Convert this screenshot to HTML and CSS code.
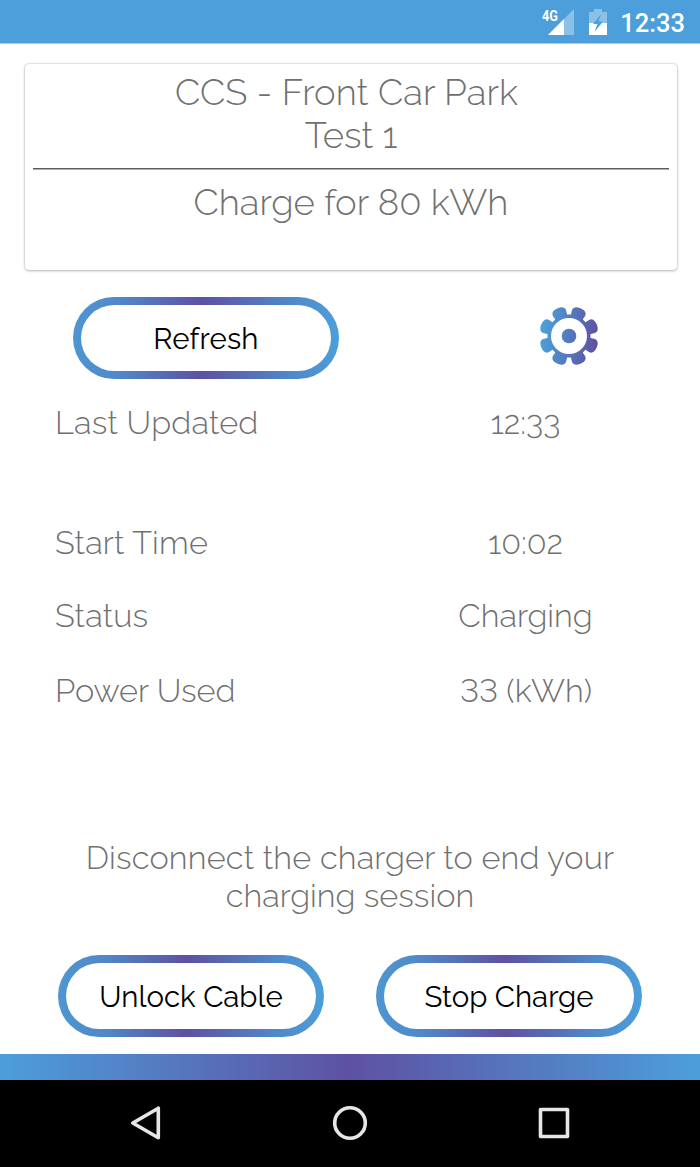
FILE: index.html
```html
<!DOCTYPE html>
<html lang="en">
<head>
  <meta charset="UTF-8" />
  <meta name="viewport" content="width=device-width, initial-scale=1.0"/>
  <title>Charging Session</title>
  <link rel="stylesheet" href="styles.css">
</head>
<body>

  <div class="statusbar">
    <svg class="signal" width="34" height="36" viewBox="-1 -8 34 36">
      <path d="M32 1V27H6Z" fill="#8cc1e7"/>
      <path d="M22 11V27H6Z" fill="#fff"/>
      <path d="M0 0H17V13H0Z" fill="#4c9fda"/>
      <text class="network" x="0" y="13" textLength="16" lengthAdjust="spacingAndGlyphs">4G</text>
    </svg>
    <svg class="battery" width="18" height="26" viewBox="0 0 18 26">
      <path d="M5 0H13V3H18V26H0V3H5Z" fill="#8cc1e7"/>
      <path d="M0 14H18V26H0Z" fill="#fff"/>
      <path d="M12 5.500L4 15H8.500L5.500 23L14 12.500H9.500Z" fill="#4c9fda"/>
    </svg>
    <span class="clock">12:33</span>
  </div>

  <div class="card">
    <div class="title location">CCS - Front Car Park</div>
    <div class="title">Test 1</div>
    <hr>
    <div class="title">Charge for 80 kWh</div>
  </div>

  <div class="tools">
    <button class="refresh">Refresh</button>
    <svg class="gear" width="60" height="60" viewBox="-30 -30 60 60">
      <defs>
        <linearGradient id="gearFill" gradientUnits="userSpaceOnUse" x1="-29" y1="-4" x2="29" y2="4">
          <stop offset="0" stop-color="#4aa3dc"/>
          <stop offset="1" stop-color="#5f4fa0"/>
        </linearGradient>
        <clipPath id="gearShape">
          <circle r="21.500"/>
          <path d="M-6.500 -16L-6.500 -21L-7.200 -25Q-7.200 -28.500 -3.500 -29.600Q0 -30.600 3.500 -29.600Q7.200 -28.500 7.200 -25L6.500 -21L6.500 -16Z" transform="rotate(22.500)"/>
          <path d="M-6.500 -16L-6.500 -21L-7.200 -25Q-7.200 -28.500 -3.500 -29.600Q0 -30.600 3.500 -29.600Q7.200 -28.500 7.200 -25L6.500 -21L6.500 -16Z" transform="rotate(67.500)"/>
          <path d="M-6.500 -16L-6.500 -21L-7.200 -25Q-7.200 -28.500 -3.500 -29.600Q0 -30.600 3.500 -29.600Q7.200 -28.500 7.200 -25L6.500 -21L6.500 -16Z" transform="rotate(112.500)"/>
          <path d="M-6.500 -16L-6.500 -21L-7.200 -25Q-7.200 -28.500 -3.500 -29.600Q0 -30.600 3.500 -29.600Q7.200 -28.500 7.200 -25L6.500 -21L6.500 -16Z" transform="rotate(157.500)"/>
          <path d="M-6.500 -16L-6.500 -21L-7.200 -25Q-7.200 -28.500 -3.500 -29.600Q0 -30.600 3.500 -29.600Q7.200 -28.500 7.200 -25L6.500 -21L6.500 -16Z" transform="rotate(202.500)"/>
          <path d="M-6.500 -16L-6.500 -21L-7.200 -25Q-7.200 -28.500 -3.500 -29.600Q0 -30.600 3.500 -29.600Q7.200 -28.500 7.200 -25L6.500 -21L6.500 -16Z" transform="rotate(247.500)"/>
          <path d="M-6.500 -16L-6.500 -21L-7.200 -25Q-7.200 -28.500 -3.500 -29.600Q0 -30.600 3.500 -29.600Q7.200 -28.500 7.200 -25L6.500 -21L6.500 -16Z" transform="rotate(292.500)"/>
          <path d="M-6.500 -16L-6.500 -21L-7.200 -25Q-7.200 -28.500 -3.500 -29.600Q0 -30.600 3.500 -29.600Q7.200 -28.500 7.200 -25L6.500 -21L6.500 -16Z" transform="rotate(337.500)"/>
        </clipPath>
      </defs>
      <rect x="-30" y="-30" width="60" height="60" fill="url(#gearFill)" clip-path="url(#gearShape)"/>
      <circle r="18" fill="#fff"/>
      <circle r="7.300" fill="url(#gearFill)"/>
    </svg>
  </div>

  <div class="details">
    <span class="label wide">Last Updated</span><span class="value">12:33</span>
    <span class="label wide">Start Time</span><span class="value">10:02</span>
    <span class="label wide">Status</span><span class="value">Charging</span>
    <span class="label">Power Used</span><span class="value used">33 (kWh)</span>
  </div>

  <div class="message">
    <div class="wide">Disconnect the charger to end your</div>
    <div>charging session</div>
  </div>

  <div class="actions">
    <button>Unlock Cable</button>
    <button>Stop Charge</button>
  </div>

  <div class="strip"></div>

  <div class="navbar">
    <svg width="32" height="36" viewBox="0 0 32 36"><path d="M28.300 3.200V32.800L2.800 18Z"/></svg>
    <svg width="36" height="36" viewBox="0 0 36 36"><circle cx="18" cy="18" r="15.300"/></svg>
    <svg width="32" height="36" viewBox="0 0 32 36"><rect x="2.500" y="4.500" width="27" height="27"/></svg>
  </div>

</body>
</html>
```
FILE: styles.css
```css
* {
  box-sizing: border-box;
}
body {
  margin: 0;
  height: 1167px;
  display: flex;
  flex-direction: column;
  overflow: hidden;
  background: #fff;
  color: #707070;
  font-family: Raleway, Lato, "Open Sans", sans-serif;
  font-weight: 300;
  white-space: nowrap;
}
.statusbar {
  height: 44px;
  flex: none;
  display: flex;
  justify-content: flex-end;
  align-items: flex-start;
  padding-right: 15px;
  background: #4c9fda;
  border-bottom: 1px solid #a5cfed;
}
.network {
  font: bold 15px Roboto, sans-serif;
  fill: #fff;
}
.battery {
  margin: 9px 13px 0 14px;
}
.clock {
  margin-top: 8px;
  color: #fff;
  font: 500 25.5px/30px Roboto, sans-serif;
}
.card {
  height: 206px;
  flex: none;
  margin: 20px 23px 0 25px;
  padding: 7px 8px 0;
  border-radius: 4px;
  box-shadow: 0 0 2px rgba(0, 0, 0, 0.3), 0 1px 3px rgba(0, 0, 0, 0.22);
  text-align: center;
}
.title {
  font-size: 36.5px;
  line-height: 43px;
}
.location {
  padding-right: 9px;
  letter-spacing: 0.1px;
}
.card hr {
  margin: 11px 0 11px;
  border: 0;
  border-top: 1px solid #5c5c5c;
  border-bottom: 1px solid #b0b0b0;
}
.tools {
  height: 82px;
  flex: none;
  display: flex;
  justify-content: space-between;
  align-items: center;
  margin: 27px 101px 0 73px;
}
.gear {
  margin-top: -4px;
}
button {
  width: 266px;
  height: 82px;
  padding: 1px 0 0;
  border: 8px solid transparent;
  border-radius: 41px;
  background: linear-gradient(#fff, #fff) padding-box,
    linear-gradient(to right, #4e96d2, #5088c9 17%, #5e51a2 48.5%, #5088c9 82%, #4b9fda) border-box;
  color: #000;
  font-family: inherit;
  font-size: 29.4px;
  font-weight: 400;
}
.refresh {
  padding: 0;
  letter-spacing: 0.2px;
}
.details {
  flex: none;
  display: grid;
  grid-template-columns: 295px 350px;
  grid-template-rows: 120px 73px 75px 74px;
  margin: 23px 0 0 55px;
  font-size: 32.5px;
  line-height: 42px;
}
.value {
  padding-left: 1px;
  text-align: center;
}
.used {
  padding-left: 2px;
  font-feature-settings: "lnum";
}
.wide {
  letter-spacing: 0.18px;
}
.message {
  flex: none;
  margin-top: 95px;
  text-align: center;
  font-size: 32.5px;
  line-height: 38px;
}
.actions {
  flex: none;
  display: flex;
  justify-content: space-between;
  margin: 40px 58px 17px;
}
.strip {
  height: 26px;
  flex: none;
  background: linear-gradient(to right, #4c9fda, #5e51a2 50%, #4c9fda);
}
.navbar {
  flex: 1;
  display: flex;
  justify-content: space-between;
  align-items: center;
  padding: 0 130px 1px;
  background: #000;
}
.navbar svg {
  fill: none;
  stroke: #e6e6e6;
  stroke-width: 3.6;
  stroke-linejoin: round;
}
```
